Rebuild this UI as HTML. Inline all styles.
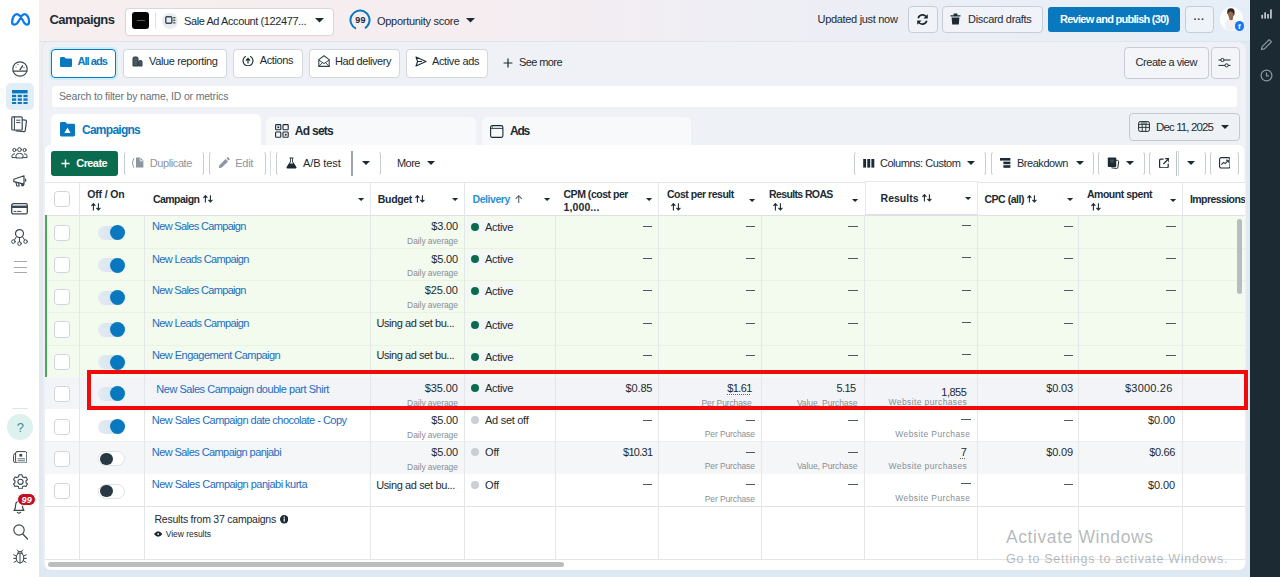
<!DOCTYPE html>
<html><head><meta charset="utf-8"><title>Campaigns</title>
<style>
*{box-sizing:border-box;margin:0;padding:0}
html,body{width:1280px;height:577px;overflow:hidden;background:linear-gradient(180deg,#f5ecef 0,#ecebf1 25%,#e6e9f0 50%,#dde9f3 100%);font-family:"Liberation Sans",sans-serif;color:#1c2b33;font-size:11px}
.abs{position:absolute}
#root{position:relative;width:1280px;height:577px;overflow:hidden}
#leftbar{left:0;top:0;width:39px;height:577px;background:#fff}
#topbar{left:39px;top:0;width:1211px;height:42px;background:linear-gradient(90deg,#f7eef0 0%,#f6edf0 35%,#efeef5 58%,#e5eef7 100%);border-bottom:1px solid #dfe3e8}
#rightbar{left:1250px;top:0;width:30px;height:577px;background:#1c2b33}
#panel{left:42px;top:41px;width:1205px;height:530px;background:linear-gradient(180deg,#eff1f6 0,#eef1f6 30%,#e8eef5 100%);border-radius:8px;border:1px solid #e1e5ea;border-left-color:#e6e9ef;border-right-color:#e6e9ef}
.t{position:absolute;white-space:nowrap}
</style></head><body><div id="root">
<div id="topbar" class="abs"></div>
<div class="abs" style="left:1243px;top:42px;width:7px;height:535px;background:#dde9f3"></div>
<div id="panel" class="abs"></div>
<div id="leftbar" class="abs"></div>
<div id="rightbar" class="abs"></div>
<svg class="abs" style="left:8.6px;top:10.8px;" width="23" height="16.8" viewBox="0 0 22 16"><path d="M3 11 C3 6 5.2 3 7.6 3 C10.2 3 12.2 7 13.8 10 C15 12.2 16.2 13 17.2 13 C18.6 13 19.2 11.6 19.2 10 C19.2 6.4 17.2 3 14.9 3 C12.6 3 11 6 9.4 9.4 C8.2 11.8 7 13 5.4 13 C3.8 13 3 12.2 3 11 Z" fill="none" stroke="#0a78ee" stroke-width="2.1" stroke-linejoin="round"/></svg>
<span class="t" style="left:49.4px;top:10px;font-size:13px;line-height:19px;font-weight:700;color:#1c2b33;letter-spacing:-0.56px;">Campaigns</span>
<div class="abs" style="left:124.5px;top:7.5px;width:209.5px;height:28px;background:#fff;border:1px solid #d3d9de;border-radius:4px;box-shadow:0 0 1px rgba(0,0,0,0.06);"></div>
<div class="abs" style="left:132px;top:12px;width:17px;height:17px;background:#050505;border-radius:3px"></div>
<div class="abs" style="left:137px;top:20.2px;width:8px;height:0.8px;background:#5a5a5a"></div>
<div class="abs" style="left:155px;top:12px;width:1px;height:17px;background:#dfe3e8"></div>
<div class="abs" style="left:162px;top:12.5px;width:16px;height:16px;background:#e9edf1;border-radius:50%"></div>
<svg class="abs" style="left:165px;top:16px;" width="11" height="9" viewBox="0 0 11 9"><rect x="0.8" y="0.8" width="6" height="6.4" rx="1" fill="none" stroke="#3a4a55" stroke-width="1.4"/><rect x="8.2" y="1" width="2.2" height="1.3" fill="#3a4a55"/><rect x="8.2" y="3.6" width="2.2" height="1.3" fill="#3a4a55"/><rect x="8.2" y="6.2" width="2.2" height="1.3" fill="#3a4a55"/></svg>
<span class="t" style="left:184.0px;top:13px;font-size:11px;line-height:16px;color:#1c2b33;letter-spacing:-0.41px;">Sale Ad Account (122477...</span>
<svg class="abs" style="left:314.5px;top:18.25px;" width="9" height="4.5" viewBox="0 0 9 4.5"><path d="M0 0H9 L4.5 4.5 Z" fill="#1c2b33"/></svg>
<svg class="abs" style="left:349px;top:9px;" width="22" height="22" viewBox="0 0 22 22"><circle cx="11" cy="11" r="9.5" fill="none" stroke="#0a78be" stroke-width="2" stroke-dasharray="50 9.7" transform="rotate(115 11 11)"/></svg>
<span class="t" style="left:355.2px;top:13px;font-size:9px;line-height:14px;font-weight:700;color:#1c2b33;letter-spacing:0.30px;">99</span>
<span class="t" style="left:377.0px;top:13px;font-size:11px;line-height:16px;color:#1c2b33;letter-spacing:-0.28px;">Opportunity score</span>
<svg class="abs" style="left:465.5px;top:18.25px;" width="9" height="4.5" viewBox="0 0 9 4.5"><path d="M0 0H9 L4.5 4.5 Z" fill="#1c2b33"/></svg>
<span class="t" style="left:817.5px;top:11px;font-size:11px;line-height:16px;color:#1c2b33;letter-spacing:-0.31px;">Updated just now</span>
<div class="abs" style="left:908px;top:6px;width:29.5px;height:26.5px;background:rgba(255,255,255,0.32);border:1px solid #c6cdd4;border-radius:4px;"></div>
<svg class="abs" style="left:916px;top:12.5px;" width="13" height="13" viewBox="0 0 13 13"><path d="M2.2 5.2A4.6 4.6 0 0 1 10.6 4.2" fill="none" stroke="#1c2b33" stroke-width="1.7"/><path d="M11.8 1.2V5.6H7.4Z" fill="#1c2b33"/><path d="M10.8 7.8A4.6 4.6 0 0 1 2.4 8.8" fill="none" stroke="#1c2b33" stroke-width="1.7"/><path d="M1.2 11.8V7.4H5.6Z" fill="#1c2b33"/></svg>
<div class="abs" style="left:942px;top:6px;width:101px;height:26.5px;background:rgba(255,255,255,0.32);border:1px solid #c6cdd4;border-radius:4px;"></div>
<svg class="abs" style="left:950px;top:13px;" width="11" height="12" viewBox="0 0 11 12"><path d="M0.5 2.2H10.5V3.6H0.5Z M3.6 0.6H7.4V2.2H3.6Z M1.6 4.4H9.4L8.8 11.6H2.2Z" fill="#1c2b33"/></svg>
<span class="t" style="left:968.0px;top:11px;font-size:11px;line-height:16px;color:#1c2b33;letter-spacing:-0.31px;">Discard drafts</span>
<div class="abs" style="left:1048px;top:6.5px;width:131.5px;height:25.5px;background:#0a78be;border-radius:3px"></div>
<span class="t" style="left:1060.0px;top:11px;font-size:11px;line-height:16px;font-weight:700;color:#fff;letter-spacing:-0.73px;">Review and publish (30)</span>
<div class="abs" style="left:1184.5px;top:6px;width:29.5px;height:26.5px;background:rgba(255,255,255,0.32);border:1px solid #c6cdd4;border-radius:4px;"></div>
<span class="t" style="left:1193.6px;top:11px;font-size:10.5px;line-height:16px;font-weight:700;color:#33424b;letter-spacing:0.17px;">···</span>
<div class="abs" style="left:1219.8px;top:7.4px;width:23.4px;height:23.6px;background:#fdfdfd;border-radius:50%"></div>
<svg class="abs" style="left:1219.8px;top:7.4px;" width="23.4" height="23.6" viewBox="0 0 23.4 23.6"><defs><clipPath id="av"><circle cx="11.7" cy="11.8" r="11.6"/></clipPath></defs><g clip-path="url(#av)"><path d="M4.6 24L5.6 15.6Q6.4 12.6 9.6 12L13.4 12Q16.4 12.8 17 15.6L18 24Z" fill="#f1eff0"/><path d="M9 9.4L9.4 12.6Q11 14 12.8 12.6L13.2 9.4Z" fill="#8d6247"/><ellipse cx="10.9" cy="7" rx="2.9" ry="3.6" fill="#94684c"/><path d="M7.2 6.6Q6.6 1.2 11 1.2Q15 1.2 14.6 5.8Q14.6 8 13.6 9.4Q13.8 4.6 10.4 4.4Q8.2 4.4 8 7.6Z" fill="#35261f"/></g></svg>
<div class="abs" style="left:1234.6px;top:21.2px;width:9.4px;height:9.4px;background:#1877f2;border-radius:50%"></div>
<span class="t" style="left:1238.1px;top:20px;font-size:8px;line-height:13px;font-weight:700;color:#fff;letter-spacing:0.00px;">f</span>
<svg class="abs" style="left:1260.6px;top:8.8px;" width="11.6" height="10" viewBox="0 0 14 12"><rect x="0.5" y="7" width="2" height="4.5" fill="#c8d0d6"/><rect x="4" y="4" width="2" height="7.5" fill="#c8d0d6"/><rect x="7.5" y="6" width="2" height="5.5" fill="#c8d0d6"/><rect x="11" y="0.5" width="2" height="11" fill="#c8d0d6"/></svg>
<svg class="abs" style="left:1260px;top:38px;" width="13" height="13" viewBox="0 0 13 13"><path d="M1.5 11.5L2.2 8.6L9.2 1.6L11.4 3.8L4.4 10.8Z" fill="none" stroke="#8e9aa3" stroke-width="1.2" stroke-linejoin="round"/></svg>
<svg class="abs" style="left:1259.6px;top:69.2px;" width="13" height="13" viewBox="0 0 13 13"><circle cx="6.5" cy="6.5" r="5.4" fill="none" stroke="#8e9aa3" stroke-width="1.2"/><path d="M6.5 3.4V6.8H9" fill="none" stroke="#8e9aa3" stroke-width="1.2"/></svg>
<div class="abs" style="left:50.5px;top:48.5px;width:65.5px;height:29px;background:#fff;border:1px solid #0a78be;border-radius:4px;box-shadow:0 0 0 2px rgba(190,236,246,0.75)"></div>
<svg class="abs" style="left:60px;top:57px;" width="12" height="10" viewBox="0 0 12 10"><path d="M0 1.2 Q0 0 1.2 0 H4.4 L5.6 1.4 H10.8 Q12 1.4 12 2.6 V8.8 Q12 10 10.8 10 H1.2 Q0 10 0 8.8 Z" fill="#0a78be"/></svg>
<span class="t" style="left:77.5px;top:53px;font-size:11px;line-height:16px;font-weight:700;color:#0a78be;letter-spacing:-0.94px;">All ads</span>
<div class="abs" style="left:122.5px;top:48.5px;width:104px;height:29px;background:#fff;border:1px solid #d3d9de;border-radius:4px;box-shadow:0 0 1px rgba(0,0,0,0.06);"></div>
<svg class="abs" style="left:132px;top:56px;" width="11" height="11" viewBox="0 0 11 11"><path d="M1 10V2.4Q1 1 2.4 1H4.6Q6 1 6 2.4V10Z M6.6 10V5.8Q6.6 4.6 7.8 4.6H8.8Q10 4.6 10 5.8V10Z" fill="#4a5963" stroke="#2a3942" stroke-width="1"/></svg>
<span class="t" style="left:149.0px;top:53px;font-size:11px;line-height:16px;color:#1c2b33;letter-spacing:-0.35px;">Value reporting</span>
<div class="abs" style="left:233px;top:48.5px;width:69.5px;height:29px;background:#fff;border:1px solid #d3d9de;border-radius:4px;box-shadow:0 0 1px rgba(0,0,0,0.06);"></div>
<svg class="abs" style="left:242.2px;top:54.8px;" width="12" height="11.4" viewBox="0 0 12 11.4"><path d="M8.6 1.5A5 5 0 1 1 3.4 1.5" fill="none" stroke="#1c2b33" stroke-width="1.15" stroke-linecap="round"/><path d="M6 8.6V3.8M3.9 5.6L6 3.5L8.1 5.6" fill="none" stroke="#1c2b33" stroke-width="1.25"/></svg>
<span class="t" style="left:259.8px;top:52px;font-size:11px;line-height:16px;color:#1c2b33;letter-spacing:-0.41px;">Actions</span>
<div class="abs" style="left:309px;top:48.5px;width:91px;height:29px;background:#fff;border:1px solid #d3d9de;border-radius:4px;box-shadow:0 0 1px rgba(0,0,0,0.06);"></div>
<svg class="abs" style="left:317.5px;top:54.8px;" width="12" height="12.4" viewBox="0 0 12 12.4"><path d="M0.8 4.6L6 0.8L11.2 4.6V11.4H0.8Z" fill="none" stroke="#34434c" stroke-width="1.1" stroke-linejoin="round"/><path d="M0.8 5L6 8.6L11.2 5M0.8 11.4L4.5 7.6M11.2 11.4L7.5 7.6" fill="none" stroke="#34434c" stroke-width="1"/></svg>
<span class="t" style="left:335.0px;top:53px;font-size:11px;line-height:16px;color:#1c2b33;letter-spacing:-0.43px;">Had delivery</span>
<div class="abs" style="left:406px;top:48.5px;width:81.5px;height:29px;background:#fff;border:1px solid #d3d9de;border-radius:4px;box-shadow:0 0 1px rgba(0,0,0,0.06);"></div>
<svg class="abs" style="left:415px;top:56px;" width="12" height="11" viewBox="0 0 12 11"><path d="M1 1L11 5.5L1 10L2.6 5.5Z M2.6 5.5H7" fill="none" stroke="#1c2b33" stroke-width="1.1" stroke-linejoin="round"/></svg>
<span class="t" style="left:432.0px;top:53px;font-size:11px;line-height:16px;color:#1c2b33;letter-spacing:-0.37px;">Active ads</span>
<svg class="abs" style="left:503px;top:57.5px;" width="10" height="10" viewBox="0 0 10 10"><path d="M5 0.6V9.4M0.6 5H9.4" stroke="#1c2b33" stroke-width="1.2"/></svg>
<span class="t" style="left:519.0px;top:54px;font-size:11px;line-height:16px;color:#1c2b33;letter-spacing:-0.59px;">See more</span>
<div class="abs" style="left:1124px;top:47px;width:84.5px;height:31.5px;background:rgba(255,255,255,0.32);border:1px solid #c6cdd4;border-radius:4px;"></div>
<span class="t" style="left:1135.5px;top:54px;font-size:11px;line-height:16px;color:#1c2b33;letter-spacing:-0.44px;">Create a view</span>
<div class="abs" style="left:1210.5px;top:47px;width:29px;height:31.5px;background:rgba(255,255,255,0.32);border:1px solid #c6cdd4;border-radius:4px;"></div>
<svg class="abs" style="left:1218px;top:57px;" width="13" height="11" viewBox="0 0 13 11"><path d="M0.5 3H12.5M0.5 8.4H12.5" stroke="#1c2b33" stroke-width="1"/><circle cx="4.4" cy="3" r="1.6" fill="#f5f7f9" stroke="#1c2b33" stroke-width="1"/><circle cx="8.6" cy="8.4" r="1.6" fill="#f5f7f9" stroke="#1c2b33" stroke-width="1"/></svg>
<div class="abs" style="left:52px;top:85.5px;width:1185px;height:21px;background:#fff;border-radius:3px"></div>
<span class="t" style="left:59.0px;top:88px;font-size:10.5px;line-height:16px;color:#65727d;letter-spacing:-0.18px;">Search to filter by name, ID or metrics</span>
<div class="abs" style="left:51px;top:114px;width:210px;height:36px;background:#fff;border-radius:6px 6px 0 0"></div>
<div class="abs" style="left:266px;top:117px;width:209.5px;height:29px;background:#f7f9fb;border-radius:6px 6px 0 0"></div>
<div class="abs" style="left:481.5px;top:117px;width:209.5px;height:29px;background:#f7f9fb;border-radius:6px 6px 0 0"></div>
<svg class="abs" style="left:60px;top:122px;" width="15" height="14.5" viewBox="0 0 15 14.5"><path d="M0 1.4Q0 0 1.4 0H5.4L7 1.8H13.6Q15 1.8 15 3.2V13.1Q15 14.5 13.6 14.5H1.4Q0 14.5 0 13.1Z" fill="#0a78be"/><path d="M7.5 5.4L10.6 11H4.4Z" fill="#fff"/></svg>
<span class="t" style="left:82.0px;top:121px;font-size:12px;line-height:18px;font-weight:700;color:#0a78be;letter-spacing:-0.74px;">Campaigns</span>
<svg class="abs" style="left:275px;top:124px;" width="14" height="14" viewBox="0 0 14 14"><g fill="none" stroke="#1c2b33" stroke-width="1.1"><rect x="0.6" y="0.6" width="5.2" height="5.2" rx="0.8"/><rect x="8" y="0.6" width="5.2" height="5.2" rx="0.8"/><rect x="0.6" y="8" width="5.2" height="5.2" rx="0.8"/><rect x="8" y="8" width="5.2" height="5.2" rx="0.8"/></g><rect x="2.4" y="2.4" width="1.8" height="1.8" fill="#1c2b33"/><rect x="9.8" y="9.8" width="1.8" height="1.8" fill="#1c2b33"/></svg>
<span class="t" style="left:294.8px;top:122px;font-size:12px;line-height:18px;font-weight:700;color:#1c2b33;letter-spacing:-0.73px;">Ad sets</span>
<svg class="abs" style="left:490px;top:124.5px;" width="13.5" height="13" viewBox="0 0 13.5 13"><rect x="0.6" y="0.6" width="12.3" height="11.8" rx="1.6" fill="none" stroke="#1c2b33" stroke-width="1.1"/><path d="M0.6 3.4H12.9" stroke="#1c2b33" stroke-width="0.9"/><circle cx="2.4" cy="2" r="0.6" fill="#1c2b33"/></svg>
<span class="t" style="left:510.0px;top:122px;font-size:12px;line-height:18px;font-weight:700;color:#1c2b33;letter-spacing:-1.22px;">Ads</span>
<div class="abs" style="left:1129px;top:113px;width:111px;height:27.5px;background:#eef2f6;border:1px solid #c3cbd2;border-radius:4px"></div>
<svg class="abs" style="left:1138px;top:121px;" width="12" height="11" viewBox="0 0 12 11"><rect x="0.6" y="0.6" width="10.8" height="9.8" rx="1.6" fill="none" stroke="#1c2b33" stroke-width="1"/><path d="M0.6 3.4H11.4M0.6 6.4H11.4M4.2 3.4V10.4M7.8 3.4V10.4M2.6 2H9.4" stroke="#1c2b33" stroke-width="0.9" fill="none"/></svg>
<span class="t" style="left:1156.0px;top:119px;font-size:11.5px;line-height:16px;color:#1c2b33;letter-spacing:-0.88px;">Dec 11, 2025</span>
<svg class="abs" style="left:1221px;top:124.5px;" width="8" height="4" viewBox="0 0 8 4"><path d="M0 0H8 L4 4 Z" fill="#1c2b33"/></svg>
<div class="abs" style="left:45px;top:145px;width:1199px;height:38px;background:#fff;border-radius:5px 5px 0 0"></div>
<div class="abs" style="left:51px;top:151px;width:67px;height:25px;background:#0a6b4e;border-radius:3px"></div>
<svg class="abs" style="left:60.5px;top:158.5px;" width="9" height="9" viewBox="0 0 9 9"><path d="M4.5 0.4V8.6M0.4 4.5H8.6" stroke="#fff" stroke-width="1.4"/></svg>
<span class="t" style="left:76.3px;top:155px;font-size:11px;line-height:16px;font-weight:700;color:#fff;letter-spacing:-0.59px;">Create</span>
<div class="abs" style="left:123.5px;top:151px;width:80.5px;height:25px;border:1px solid #c6cdd3;border-top-color:transparent;border-bottom-color:transparent;border-radius:4px"></div>
<svg class="abs" style="left:132px;top:157px;" width="12" height="12" viewBox="0 0 12 12"><path d="M2 1.4Q0.6 3.4 0.6 6Q0.6 8.6 2 10.6" fill="none" stroke="#8c969e" stroke-width="1"/><path d="M4 0.6H8.4L11.4 3.6V10.6H4Z" fill="#8c969e"/><path d="M8.2 0.8V3.8H11.2" fill="none" stroke="#fff" stroke-width="0.8"/></svg>
<span class="t" style="left:149.8px;top:155px;font-size:11px;line-height:16px;color:#8c969e;letter-spacing:-0.41px;">Duplicate</span>
<div class="abs" style="left:208.5px;top:151px;width:57px;height:25px;border:1px solid #c6cdd3;border-top-color:transparent;border-bottom-color:transparent;border-radius:4px"></div>
<svg class="abs" style="left:217.5px;top:157px;" width="12" height="12" viewBox="0 0 12 12"><path d="M0.8 11.2L1.4 8.2L7.6 2L10 4.4L3.8 10.6Z M8.4 1.2L9.2 0.4Q9.8 0 10.4 0.6L11.4 1.6Q12 2.2 11.4 2.8L10.6 3.6Z" fill="#8c969e"/></svg>
<span class="t" style="left:235.3px;top:155px;font-size:11px;line-height:16px;color:#8c969e;letter-spacing:-0.31px;">Edit</span>
<div class="abs" style="left:270.3px;top:151px;width:1px;height:25px;background:#d9dee2"></div>
<div class="abs" style="left:276px;top:151px;width:104.8px;height:25px;border:1px solid #c6cdd3;border-top-color:transparent;border-bottom-color:transparent;border-radius:4px"></div>
<svg class="abs" style="left:285.5px;top:157px;" width="11" height="12" viewBox="0 0 11 12"><path d="M3.6 0.6H7.4V1.6H6.9V4.6L10.4 10Q11 11.4 9.6 11.4H1.4Q0 11.4 0.6 10L4.1 4.6V1.6H3.6Z" fill="#1c2b33"/><path d="M4.9 1.6H6.1V4.9L7.2 6.6H3.8L4.9 4.9Z" fill="#fff"/></svg>
<span class="t" style="left:303.0px;top:155px;font-size:11px;line-height:16px;color:#1c2b33;letter-spacing:-0.11px;">A/B test</span>
<div class="abs" style="left:351px;top:151px;width:1.6px;height:25px;background:#9ba4ab"></div>
<svg class="abs" style="left:361.8px;top:161px;" width="8" height="4" viewBox="0 0 8 4"><path d="M0 0H8 L4 4 Z" fill="#1c2b33"/></svg>
<span class="t" style="left:397.0px;top:155px;font-size:11px;line-height:16px;color:#1c2b33;letter-spacing:-0.56px;">More</span>
<svg class="abs" style="left:427.4px;top:161px;" width="8" height="4" viewBox="0 0 8 4"><path d="M0 0H8 L4 4 Z" fill="#1c2b33"/></svg>
<div class="abs" style="left:853.5px;top:151px;width:132.5px;height:25px;border:1px solid #c6cdd3;border-top-color:transparent;border-bottom-color:transparent;border-radius:4px"></div>
<svg class="abs" style="left:862.5px;top:158.5px;" width="12" height="9" viewBox="0 0 12 9"><rect x="0.2" y="0" width="2.9" height="8.6" fill="#1c2b33"/><rect x="4.3" y="0" width="2.9" height="8.6" fill="#1c2b33"/><rect x="8.4" y="0" width="2.9" height="8.6" fill="#1c2b33"/></svg>
<span class="t" style="left:880.0px;top:155px;font-size:11px;line-height:16px;color:#1c2b33;letter-spacing:-0.47px;">Columns: Custom</span>
<svg class="abs" style="left:967.4px;top:161px;" width="8" height="4" viewBox="0 0 8 4"><path d="M0 0H8 L4 4 Z" fill="#1c2b33"/></svg>
<div class="abs" style="left:990.5px;top:151px;width:103.5px;height:25px;border:1px solid #c6cdd3;border-top-color:transparent;border-bottom-color:transparent;border-radius:4px"></div>
<svg class="abs" style="left:1000px;top:158px;" width="11" height="10" viewBox="0 0 11 10"><rect x="0" y="0" width="10.4" height="2.6" fill="#1c2b33"/><rect x="3.4" y="3.6" width="7" height="2.6" fill="#1c2b33"/><rect x="3.4" y="7.2" width="7" height="2.6" fill="#1c2b33"/></svg>
<span class="t" style="left:1017.0px;top:155px;font-size:11px;line-height:16px;color:#1c2b33;letter-spacing:-0.47px;">Breakdown</span>
<svg class="abs" style="left:1075.5px;top:161px;" width="8" height="4" viewBox="0 0 8 4"><path d="M0 0H8 L4 4 Z" fill="#1c2b33"/></svg>
<div class="abs" style="left:1098.3px;top:151px;width:46.7px;height:25px;border:1px solid #c6cdd3;border-top-color:transparent;border-bottom-color:transparent;border-radius:4px"></div>
<svg class="abs" style="left:1106.5px;top:157px;" width="13" height="12" viewBox="0 0 13 12"><path d="M3.4 2.6L10.6 3.4Q11.8 3.6 11.6 4.8L10.8 10.6Q10.6 11.6 9.6 11.4L4.4 10.8" fill="none" stroke="#1c2b33" stroke-width="1"/><path d="M1.6 0.4H8.4Q9.2 0.4 9.2 1.2V9.2Q9.2 10 8.4 10H1.6Q0.8 10 0.8 9.2V1.2Q0.8 0.4 1.6 0.4Z" fill="#1c2b33"/><path d="M3.2 3.2H7M3.2 5H7" stroke="#6b7780" stroke-width="0.7"/></svg>
<svg class="abs" style="left:1125.9px;top:161px;" width="8" height="4" viewBox="0 0 8 4"><path d="M0 0H8 L4 4 Z" fill="#1c2b33"/></svg>
<div class="abs" style="left:1149.2px;top:151px;width:56.8px;height:25px;border:1px solid #c6cdd3;border-top-color:transparent;border-bottom-color:transparent;border-radius:4px"></div>
<svg class="abs" style="left:1158.5px;top:157.8px;" width="10.5" height="10.5" viewBox="0 0 10.5 10.5"><path d="M4.6 1.2H1.8Q0.6 1.2 0.6 2.4V8.6Q0.6 9.8 1.8 9.8H8Q9.2 9.8 9.2 8.6V5.8" fill="none" stroke="#1c2b33" stroke-width="1.2"/><path d="M4.4 6L9.4 1" stroke="#1c2b33" stroke-width="1.2"/><path d="M6.2 0.6H9.9V4.3" fill="none" stroke="#1c2b33" stroke-width="1.2"/></svg>
<div class="abs" style="left:1176.4px;top:151px;width:0.9px;height:25px;background:#bcc3c9"></div>
<div class="abs" style="left:1178.1px;top:151px;width:0.9px;height:25px;background:#d0d5da"></div>
<svg class="abs" style="left:1187px;top:161px;" width="8" height="4" viewBox="0 0 8 4"><path d="M0 0H8 L4 4 Z" fill="#1c2b33"/></svg>
<div class="abs" style="left:1210px;top:151px;width:29px;height:25px;border:1px solid #c6cdd3;border-top-color:transparent;border-bottom-color:transparent;border-radius:4px"></div>
<svg class="abs" style="left:1218.8px;top:157.2px;" width="11.6" height="11.6" viewBox="0 0 11.6 11.6"><rect x="0.6" y="0.6" width="10.4" height="10.4" rx="1.6" fill="none" stroke="#1c2b33" stroke-width="1.1"/><path d="M2.4 7.6L4.6 5.4L6.2 6.6L9 3.6" fill="none" stroke="#1c2b33" stroke-width="1.1"/><path d="M7 3.2H9.4V5.6" fill="none" stroke="#1c2b33" stroke-width="1"/></svg>
<div class="abs" style="left:45px;top:182px;width:1199.5px;height:33.4px;background:#fff;border-top:1px solid #e2e6ea"></div>
<div class="abs" style="left:45px;top:215.4px;width:1199.5px;height:32.3px;background:#f3faee;border-top:1px solid rgba(40,60,40,0.045)"></div>
<div class="abs" style="left:45px;top:247.7px;width:1199.5px;height:32.3px;background:#f3faee;border-top:1px solid rgba(40,60,40,0.045)"></div>
<div class="abs" style="left:45px;top:280px;width:1199.5px;height:32.3px;background:#f3faee;border-top:1px solid rgba(40,60,40,0.045)"></div>
<div class="abs" style="left:45px;top:312.3px;width:1199.5px;height:32.3px;background:#f3faee;border-top:1px solid rgba(40,60,40,0.045)"></div>
<div class="abs" style="left:45px;top:344.6px;width:1199.5px;height:32.3px;background:#f3faee;border-top:1px solid rgba(40,60,40,0.045)"></div>
<div class="abs" style="left:45px;top:376.9px;width:1199.5px;height:32.3px;background:#f2f4f7;"></div>
<div class="abs" style="left:45px;top:409.2px;width:1199.5px;height:32.3px;background:#ffffff;"></div>
<div class="abs" style="left:45px;top:441.5px;width:1199.5px;height:32.3px;background:#f5f6f8;"></div>
<div class="abs" style="left:45px;top:473.8px;width:1199.5px;height:32.3px;background:#ffffff;"></div>
<div class="abs" style="left:45px;top:506.1px;width:1199.5px;height:53.9px;background:#fff;border-top:1px solid #dfe3e6"></div>
<div class="abs" style="left:45px;top:559px;width:1199.5px;height:11px;background:#fff;border-radius:0 0 6px 6px;border-top:1px solid #e3e6e9"></div>
<div class="abs" style="left:45px;top:215px;width:1199.5px;height:1px;background:#dde1e5"></div>
<div class="abs" style="left:45px;top:215.4px;width:1.6px;height:161.6px;background:#4fa75a"></div>
<div class="abs" style="left:79px;top:182px;width:1px;height:378px;background:#e4e7ea"></div>
<div class="abs" style="left:144px;top:215.4px;width:1px;height:344.6px;background:#e4e7ea"></div>
<div class="abs" style="left:370px;top:182px;width:1px;height:378px;background:#e4e7ea"></div>
<div class="abs" style="left:464px;top:182px;width:1px;height:378px;background:#e4e7ea"></div>
<div class="abs" style="left:555px;top:215.4px;width:1px;height:344.6px;background:#e4e7ea"></div>
<div class="abs" style="left:658px;top:182px;width:1px;height:378px;background:#e4e7ea"></div>
<div class="abs" style="left:760.5px;top:215.4px;width:1px;height:344.6px;background:#e4e7ea"></div>
<div class="abs" style="left:864px;top:215.4px;width:1px;height:344.6px;background:#e4e7ea"></div>
<div class="abs" style="left:977px;top:215.4px;width:1px;height:344.6px;background:#e4e7ea"></div>
<div class="abs" style="left:1078px;top:215.4px;width:1px;height:344.6px;background:#e4e7ea"></div>
<div class="abs" style="left:1181.5px;top:182px;width:1px;height:378px;background:#e4e7ea"></div>
<div class="abs" style="left:864.5px;top:181px;width:113.5px;height:33.5px;background:#fff;border:1px solid #e6e9ec;border-bottom-color:#dde1e5"></div>
<div class="abs" style="left:1237px;top:219px;width:4.5px;height:75px;background:#b9bdc1;border-radius:3px"></div>
<div class="abs" style="left:48px;top:562px;width:516.3px;height:5px;background:#bcbdbf;border-radius:3px"></div>
<div class="abs" style="left:53.5px;top:191px;width:16.8px;height:16.4px;background:#fff;border:1px solid #cfd5da;border-radius:3.5px"></div>
<span class="t" style="left:87.3px;top:186px;font-size:10.5px;line-height:16px;font-weight:700;color:#1c2b33;letter-spacing:-0.17px;font-weight:600;">Off / On</span>
<svg class="abs" style="left:91px;top:203.4px;" width="10" height="7.6" viewBox="0 0 10 7.6"><path d="M2.4 7.4V0.8M0.4 2.8L2.4 0.6L4.4 2.8M7.4 0.2V6.8M5.4 4.8L7.4 7L9.4 4.8" fill="none" stroke="#1c2b33" stroke-width="1.1"/></svg>
<span class="t" style="left:152.9px;top:191px;font-size:10.5px;line-height:16px;font-weight:700;color:#1c2b33;letter-spacing:-0.52px;font-weight:600;">Campaign</span>
<svg class="abs" style="left:202.5px;top:195px;" width="10" height="7.6" viewBox="0 0 10 7.6"><path d="M2.4 7.4V0.8M0.4 2.8L2.4 0.6L4.4 2.8M7.4 0.2V6.8M5.4 4.8L7.4 7L9.4 4.8" fill="none" stroke="#1c2b33" stroke-width="1.1"/></svg>
<svg class="abs" style="left:358.4px;top:198.45px;" width="6.2" height="3.1" viewBox="0 0 6.2 3.1"><path d="M0 0H6.2 L3.1 3.1 Z" fill="#1c2b33"/></svg>
<span class="t" style="left:377.8px;top:191px;font-size:10.5px;line-height:16px;font-weight:700;color:#1c2b33;letter-spacing:-0.33px;font-weight:600;">Budget</span>
<svg class="abs" style="left:415.2px;top:195px;" width="10" height="7.6" viewBox="0 0 10 7.6"><path d="M2.4 7.4V0.8M0.4 2.8L2.4 0.6L4.4 2.8M7.4 0.2V6.8M5.4 4.8L7.4 7L9.4 4.8" fill="none" stroke="#1c2b33" stroke-width="1.1"/></svg>
<svg class="abs" style="left:451.9px;top:198.45px;" width="6.2" height="3.1" viewBox="0 0 6.2 3.1"><path d="M0 0H6.2 L3.1 3.1 Z" fill="#1c2b33"/></svg>
<span class="t" style="left:472.5px;top:191px;font-size:10.5px;line-height:16px;font-weight:700;color:#2b8fd6;letter-spacing:-0.44px;font-weight:600;">Delivery</span>
<svg class="abs" style="left:514.8px;top:194.8px;" width="8" height="8" viewBox="0 0 8 8"><path d="M3.7 8V0.8M0.6 3.8L3.7 0.7L6.8 3.8" fill="none" stroke="#5b6770" stroke-width="1.1"/></svg>
<svg class="abs" style="left:544.1px;top:198.45px;" width="6.2" height="3.1" viewBox="0 0 6.2 3.1"><path d="M0 0H6.2 L3.1 3.1 Z" fill="#1c2b33"/></svg>
<span class="t" style="left:563.5px;top:186px;font-size:10.5px;line-height:16px;font-weight:700;color:#1c2b33;letter-spacing:-0.47px;font-weight:600;">CPM (cost per</span>
<span class="t" style="left:563.5px;top:199px;font-size:10.5px;line-height:16px;font-weight:700;color:#1c2b33;letter-spacing:0.11px;font-weight:600;">1,000...</span>
<svg class="abs" style="left:646.2px;top:198.45px;" width="6.2" height="3.1" viewBox="0 0 6.2 3.1"><path d="M0 0H6.2 L3.1 3.1 Z" fill="#1c2b33"/></svg>
<span class="t" style="left:666.9px;top:186px;font-size:10.5px;line-height:16px;font-weight:700;color:#1c2b33;letter-spacing:-0.48px;font-weight:600;">Cost per result</span>
<svg class="abs" style="left:670.6px;top:203.4px;" width="10" height="7.6" viewBox="0 0 10 7.6"><path d="M2.4 7.4V0.8M0.4 2.8L2.4 0.6L4.4 2.8M7.4 0.2V6.8M5.4 4.8L7.4 7L9.4 4.8" fill="none" stroke="#1c2b33" stroke-width="1.1"/></svg>
<svg class="abs" style="left:749.3px;top:199.45px;" width="6.2" height="3.1" viewBox="0 0 6.2 3.1"><path d="M0 0H6.2 L3.1 3.1 Z" fill="#1c2b33"/></svg>
<span class="t" style="left:769.0px;top:186px;font-size:10.5px;line-height:16px;font-weight:700;color:#1c2b33;letter-spacing:-0.62px;font-weight:600;">Results ROAS</span>
<svg class="abs" style="left:772.8px;top:203.4px;" width="10" height="7.6" viewBox="0 0 10 7.6"><path d="M2.4 7.4V0.8M0.4 2.8L2.4 0.6L4.4 2.8M7.4 0.2V6.8M5.4 4.8L7.4 7L9.4 4.8" fill="none" stroke="#1c2b33" stroke-width="1.1"/></svg>
<svg class="abs" style="left:851.7px;top:199.45px;" width="6.2" height="3.1" viewBox="0 0 6.2 3.1"><path d="M0 0H6.2 L3.1 3.1 Z" fill="#1c2b33"/></svg>
<span class="t" style="left:880.6px;top:190px;font-size:10.5px;line-height:16px;font-weight:700;color:#1c2b33;letter-spacing:-0.00px;font-weight:600;">Results</span>
<svg class="abs" style="left:922px;top:194.1px;" width="10" height="7.6" viewBox="0 0 10 7.6"><path d="M2.4 7.4V0.8M0.4 2.8L2.4 0.6L4.4 2.8M7.4 0.2V6.8M5.4 4.8L7.4 7L9.4 4.8" fill="none" stroke="#1c2b33" stroke-width="1.1"/></svg>
<svg class="abs" style="left:965.1px;top:197.45px;" width="6.2" height="3.1" viewBox="0 0 6.2 3.1"><path d="M0 0H6.2 L3.1 3.1 Z" fill="#1c2b33"/></svg>
<span class="t" style="left:984.4px;top:191px;font-size:10.5px;line-height:16px;font-weight:700;color:#1c2b33;letter-spacing:-0.46px;font-weight:600;">CPC (all)</span>
<svg class="abs" style="left:1027.3px;top:195px;" width="10" height="7.6" viewBox="0 0 10 7.6"><path d="M2.4 7.4V0.8M0.4 2.8L2.4 0.6L4.4 2.8M7.4 0.2V6.8M5.4 4.8L7.4 7L9.4 4.8" fill="none" stroke="#1c2b33" stroke-width="1.1"/></svg>
<svg class="abs" style="left:1067.4px;top:198.45px;" width="6.2" height="3.1" viewBox="0 0 6.2 3.1"><path d="M0 0H6.2 L3.1 3.1 Z" fill="#1c2b33"/></svg>
<span class="t" style="left:1086.9px;top:186px;font-size:10.5px;line-height:16px;font-weight:700;color:#1c2b33;letter-spacing:-0.46px;font-weight:600;">Amount spent</span>
<svg class="abs" style="left:1090.6px;top:203.4px;" width="10" height="7.6" viewBox="0 0 10 7.6"><path d="M2.4 7.4V0.8M0.4 2.8L2.4 0.6L4.4 2.8M7.4 0.2V6.8M5.4 4.8L7.4 7L9.4 4.8" fill="none" stroke="#1c2b33" stroke-width="1.1"/></svg>
<svg class="abs" style="left:1169.6px;top:199.45px;" width="6.2" height="3.1" viewBox="0 0 6.2 3.1"><path d="M0 0H6.2 L3.1 3.1 Z" fill="#1c2b33"/></svg>
<div class="abs" style="left:1185px;top:185px;width:59.5px;height:28px;overflow:hidden">
<span class="t" style="left:5.0px;top:6px;font-size:10.5px;line-height:16px;font-weight:700;color:#1c2b33;letter-spacing:-0.58px;font-weight:600;">Impressions</span>
</div>
<div class="abs" style="left:53.5px;top:224.5px;width:16.8px;height:16.4px;background:#fff;border:1px solid #cfd5da;border-radius:3.5px"></div>
<div class="abs" style="left:98px;top:225.9px;width:27.3px;height:14px;background:linear-gradient(90deg,#e3ebf2,#cfe0ee);border-radius:7px"></div>
<div class="abs" style="left:110.4px;top:225.4px;width:15px;height:15px;background:#0a78be;border-radius:50%"></div>
<span class="t" style="left:151.9px;top:218px;font-size:11px;line-height:16px;color:#1b6ec2;letter-spacing:-0.66px;">New Sales Campaign</span>
<span class="t" style="left:431.3px;top:218px;font-size:11px;line-height:16px;color:#1c2b33;letter-spacing:-0.20px;">$3.00</span>
<span class="t" style="left:407.1px;top:234px;font-size:8.5px;line-height:14px;color:#878f97;letter-spacing:-0.09px;">Daily average</span>
<div class="abs" style="left:466.5px;top:220.6px;width:52px;height:12.4px;background:rgba(244,246,250,0.75);border-radius:3px"></div>
<div class="abs" style="left:471px;top:222.6px;width:8.2px;height:8.2px;background:#0a6b4e;border-radius:50%"></div>
<span class="t" style="left:485.0px;top:219px;font-size:11px;line-height:16px;color:#1c2b33;letter-spacing:-0.33px;">Active</span>
<div class="abs" style="left:643.1px;top:226px;width:9.4px;height:1px;background:#4c5861"></div>
<div class="abs" style="left:745.6px;top:226px;width:9.4px;height:1px;background:#4c5861"></div>
<div class="abs" style="left:848.4px;top:226px;width:9.4px;height:1px;background:#4c5861"></div>
<div class="abs" style="left:961.6px;top:225px;width:9.4px;height:1px;background:#4c5861"></div>
<div class="abs" style="left:1063.6px;top:226px;width:9.4px;height:1px;background:#4c5861"></div>
<div class="abs" style="left:1166.2px;top:226px;width:9.4px;height:1px;background:#4c5861"></div>
<div class="abs" style="left:53.5px;top:256.8px;width:16.8px;height:16.4px;background:#fff;border:1px solid #cfd5da;border-radius:3.5px"></div>
<div class="abs" style="left:98px;top:258.2px;width:27.3px;height:14px;background:linear-gradient(90deg,#e3ebf2,#cfe0ee);border-radius:7px"></div>
<div class="abs" style="left:110.4px;top:257.7px;width:15px;height:15px;background:#0a78be;border-radius:50%"></div>
<span class="t" style="left:151.9px;top:251px;font-size:11px;line-height:16px;color:#1b6ec2;letter-spacing:-0.63px;">New Leads Campaign</span>
<span class="t" style="left:431.3px;top:251px;font-size:11px;line-height:16px;color:#1c2b33;letter-spacing:-0.20px;">$5.00</span>
<span class="t" style="left:407.1px;top:266px;font-size:8.5px;line-height:14px;color:#878f97;letter-spacing:-0.09px;">Daily average</span>
<div class="abs" style="left:466.5px;top:253.2px;width:52px;height:12.4px;background:rgba(244,246,250,0.75);border-radius:3px"></div>
<div class="abs" style="left:471px;top:255.2px;width:8.2px;height:8.2px;background:#0a6b4e;border-radius:50%"></div>
<span class="t" style="left:485.0px;top:251px;font-size:11px;line-height:16px;color:#1c2b33;letter-spacing:-0.33px;">Active</span>
<div class="abs" style="left:643.1px;top:258px;width:9.4px;height:1px;background:#4c5861"></div>
<div class="abs" style="left:745.6px;top:258px;width:9.4px;height:1px;background:#4c5861"></div>
<div class="abs" style="left:848.4px;top:258px;width:9.4px;height:1px;background:#4c5861"></div>
<div class="abs" style="left:961.6px;top:257px;width:9.4px;height:1px;background:#4c5861"></div>
<div class="abs" style="left:1063.6px;top:258px;width:9.4px;height:1px;background:#4c5861"></div>
<div class="abs" style="left:1166.2px;top:258px;width:9.4px;height:1px;background:#4c5861"></div>
<div class="abs" style="left:53.5px;top:289.1px;width:16.8px;height:16.4px;background:#fff;border:1px solid #cfd5da;border-radius:3.5px"></div>
<div class="abs" style="left:98px;top:290.5px;width:27.3px;height:14px;background:linear-gradient(90deg,#e3ebf2,#cfe0ee);border-radius:7px"></div>
<div class="abs" style="left:110.4px;top:290px;width:15px;height:15px;background:#0a78be;border-radius:50%"></div>
<span class="t" style="left:151.9px;top:282px;font-size:11px;line-height:16px;color:#1b6ec2;letter-spacing:-0.66px;">New Sales Campaign</span>
<span class="t" style="left:424.8px;top:282px;font-size:11px;line-height:16px;color:#1c2b33;letter-spacing:-0.11px;">$25.00</span>
<span class="t" style="left:407.1px;top:298px;font-size:8.5px;line-height:14px;color:#878f97;letter-spacing:-0.09px;">Daily average</span>
<div class="abs" style="left:466.5px;top:285.1px;width:52px;height:12.4px;background:rgba(244,246,250,0.75);border-radius:3px"></div>
<div class="abs" style="left:471px;top:287.1px;width:8.2px;height:8.2px;background:#0a6b4e;border-radius:50%"></div>
<span class="t" style="left:485.0px;top:283px;font-size:11px;line-height:16px;color:#1c2b33;letter-spacing:-0.33px;">Active</span>
<div class="abs" style="left:643.1px;top:290px;width:9.4px;height:1px;background:#4c5861"></div>
<div class="abs" style="left:745.6px;top:290px;width:9.4px;height:1px;background:#4c5861"></div>
<div class="abs" style="left:848.4px;top:290px;width:9.4px;height:1px;background:#4c5861"></div>
<div class="abs" style="left:961.6px;top:290px;width:9.4px;height:1px;background:#4c5861"></div>
<div class="abs" style="left:1063.6px;top:290px;width:9.4px;height:1px;background:#4c5861"></div>
<div class="abs" style="left:1166.2px;top:290px;width:9.4px;height:1px;background:#4c5861"></div>
<div class="abs" style="left:53.5px;top:321.4px;width:16.8px;height:16.4px;background:#fff;border:1px solid #cfd5da;border-radius:3.5px"></div>
<div class="abs" style="left:98px;top:322.8px;width:27.3px;height:14px;background:linear-gradient(90deg,#e3ebf2,#cfe0ee);border-radius:7px"></div>
<div class="abs" style="left:110.4px;top:322.3px;width:15px;height:15px;background:#0a78be;border-radius:50%"></div>
<span class="t" style="left:151.9px;top:315px;font-size:11px;line-height:16px;color:#1b6ec2;letter-spacing:-0.63px;">New Leads Campaign</span>
<span class="t" style="left:376.5px;top:315px;font-size:11px;line-height:16px;color:#1c2b33;letter-spacing:-0.44px;">Using ad set bu...</span>
<div class="abs" style="left:466.5px;top:319.1px;width:52px;height:12.4px;background:rgba(244,246,250,0.75);border-radius:3px"></div>
<div class="abs" style="left:471px;top:321.1px;width:8.2px;height:8.2px;background:#0a6b4e;border-radius:50%"></div>
<span class="t" style="left:485.0px;top:317px;font-size:11px;line-height:16px;color:#1c2b33;letter-spacing:-0.33px;">Active</span>
<div class="abs" style="left:643.1px;top:323px;width:9.4px;height:1px;background:#4c5861"></div>
<div class="abs" style="left:745.6px;top:323px;width:9.4px;height:1px;background:#4c5861"></div>
<div class="abs" style="left:848.4px;top:323px;width:9.4px;height:1px;background:#4c5861"></div>
<div class="abs" style="left:961.6px;top:322px;width:9.4px;height:1px;background:#4c5861"></div>
<div class="abs" style="left:1063.6px;top:323px;width:9.4px;height:1px;background:#4c5861"></div>
<div class="abs" style="left:1166.2px;top:323px;width:9.4px;height:1px;background:#4c5861"></div>
<div class="abs" style="left:53.5px;top:353.7px;width:16.8px;height:16.4px;background:#fff;border:1px solid #cfd5da;border-radius:3.5px"></div>
<div class="abs" style="left:98px;top:355.1px;width:27.3px;height:14px;background:linear-gradient(90deg,#e3ebf2,#cfe0ee);border-radius:7px"></div>
<div class="abs" style="left:110.4px;top:354.6px;width:15px;height:15px;background:#0a78be;border-radius:50%"></div>
<span class="t" style="left:151.9px;top:347px;font-size:11px;line-height:16px;color:#1b6ec2;letter-spacing:-0.54px;">New Engagement Campaign</span>
<span class="t" style="left:376.5px;top:347px;font-size:11px;line-height:16px;color:#1c2b33;letter-spacing:-0.44px;">Using ad set bu...</span>
<div class="abs" style="left:466.5px;top:351px;width:52px;height:12.4px;background:rgba(244,246,250,0.75);border-radius:3px"></div>
<div class="abs" style="left:471px;top:353px;width:8.2px;height:8.2px;background:#0a6b4e;border-radius:50%"></div>
<span class="t" style="left:485.0px;top:349px;font-size:11px;line-height:16px;color:#1c2b33;letter-spacing:-0.33px;">Active</span>
<div class="abs" style="left:643.1px;top:355px;width:9.4px;height:1px;background:#4c5861"></div>
<div class="abs" style="left:745.6px;top:355px;width:9.4px;height:1px;background:#4c5861"></div>
<div class="abs" style="left:848.4px;top:355px;width:9.4px;height:1px;background:#4c5861"></div>
<div class="abs" style="left:961.6px;top:354px;width:9.4px;height:1px;background:#4c5861"></div>
<div class="abs" style="left:1063.6px;top:355px;width:9.4px;height:1px;background:#4c5861"></div>
<div class="abs" style="left:1166.2px;top:355px;width:9.4px;height:1px;background:#4c5861"></div>
<div class="abs" style="left:53.5px;top:385.5px;width:16.8px;height:16.4px;background:#fff;border:1px solid #cfd5da;border-radius:3.5px"></div>
<div class="abs" style="left:98px;top:386.8px;width:27.3px;height:14px;background:linear-gradient(90deg,#e3ebf2,#cfe0ee);border-radius:7px"></div>
<div class="abs" style="left:110.4px;top:386.3px;width:15px;height:15px;background:#0a78be;border-radius:50%"></div>
<span class="t" style="left:156.3px;top:381px;font-size:11px;line-height:16px;color:#1b6ec2;letter-spacing:-0.47px;">New Sales Campaign double part Shirt</span>
<span class="t" style="left:424.8px;top:380px;font-size:11px;line-height:16px;color:#1c2b33;letter-spacing:-0.11px;">$35.00</span>
<span class="t" style="left:407.1px;top:396px;font-size:8.5px;line-height:14px;color:#878f97;letter-spacing:-0.09px;">Daily average</span>
<div class="abs" style="left:471px;top:383.9px;width:8.2px;height:8.2px;background:#0a6b4e;border-radius:50%"></div>
<span class="t" style="left:485.0px;top:380px;font-size:11px;line-height:16px;color:#1c2b33;letter-spacing:-0.33px;">Active</span>
<span class="t" style="left:625.6px;top:380px;font-size:11px;line-height:16px;color:#1c2b33;letter-spacing:-0.17px;">$0.85</span>
<span class="t" style="left:727.2px;top:380px;font-size:11px;line-height:16px;color:#1c2b33;letter-spacing:-0.57px;text-decoration:underline dotted #5b6770 1px;text-underline-offset:1.5px;">$1.61</span>
<span class="t" style="left:701.5px;top:396px;font-size:8.5px;line-height:14px;color:#878f97;letter-spacing:-0.12px;">Per Purchase</span>
<span class="t" style="left:836.5px;top:380px;font-size:11px;line-height:16px;color:#1c2b33;letter-spacing:-0.58px;">5.15</span>
<span class="t" style="left:796.9px;top:396px;font-size:8.5px;line-height:14px;color:#878f97;letter-spacing:-0.09px;">Value, Purchase</span>
<span class="t" style="left:941.3px;top:384px;font-size:11px;line-height:16px;color:#1c2b33;letter-spacing:-0.50px;">1,855</span>
<span class="t" style="left:888.5px;top:395px;font-size:8.5px;line-height:14px;color:#878f97;letter-spacing:0.39px;">Website purchases</span>
<span class="t" style="left:1046.2px;top:380px;font-size:11px;line-height:16px;color:#1c2b33;letter-spacing:-0.15px;">$0.03</span>
<span class="t" style="left:1125.0px;top:380px;font-size:11px;line-height:16px;color:#1c2b33;letter-spacing:0.20px;">$3000.26</span>
<div class="abs" style="left:53.5px;top:418.5px;width:16.8px;height:16.4px;background:#fff;border:1px solid #cfd5da;border-radius:3.5px"></div>
<div class="abs" style="left:98px;top:419.5px;width:27.3px;height:14px;background:linear-gradient(90deg,#e3ebf2,#cfe0ee);border-radius:7px"></div>
<div class="abs" style="left:110.4px;top:419px;width:15px;height:15px;background:#0a78be;border-radius:50%"></div>
<span class="t" style="left:151.8px;top:412px;font-size:11px;line-height:16px;color:#1b6ec2;letter-spacing:-0.53px;">New Sales Campaign date chocolate - Copy</span>
<span class="t" style="left:431.3px;top:412px;font-size:11px;line-height:16px;color:#1c2b33;letter-spacing:-0.20px;">$5.00</span>
<span class="t" style="left:407.1px;top:428px;font-size:8.5px;line-height:14px;color:#878f97;letter-spacing:-0.09px;">Daily average</span>
<div class="abs" style="left:471px;top:415.9px;width:8.2px;height:8.2px;background:#c9cfd6;border-radius:50%"></div>
<span class="t" style="left:485.0px;top:412px;font-size:11px;line-height:16px;color:#1c2b33;letter-spacing:-0.28px;">Ad set off</span>
<div class="abs" style="left:643.1px;top:420px;width:9.4px;height:1px;background:#4c5861"></div>
<div class="abs" style="left:745.6px;top:420px;width:9.4px;height:1px;background:#4c5861"></div>
<div class="abs" style="left:848.4px;top:420px;width:9.4px;height:1px;background:#4c5861"></div>
<div class="abs" style="left:961.2px;top:419px;width:9.4px;height:1px;background:#4c5861"></div>
<div class="abs" style="left:1063.6px;top:420px;width:9.4px;height:1px;background:#4c5861"></div>
<span class="t" style="left:704.8px;top:427px;font-size:8.5px;line-height:14px;color:#878f97;letter-spacing:-0.12px;">Per Purchase</span>
<span class="t" style="left:895.3px;top:427px;font-size:8.5px;line-height:14px;color:#878f97;letter-spacing:0.39px;">Website Purchase</span>
<span class="t" style="left:1148.0px;top:412px;font-size:11px;line-height:16px;color:#1c2b33;letter-spacing:-0.10px;">$0.00</span>
<div class="abs" style="left:53.5px;top:450.8px;width:16.8px;height:16.4px;background:#fff;border:1px solid #cfd5da;border-radius:3.5px"></div>
<div class="abs" style="left:98px;top:451.3px;width:27.3px;height:15px;background:#fff;border:1px solid #dde2e6;border-radius:8px"></div>
<div class="abs" style="left:100.2px;top:452.6px;width:12.4px;height:12.4px;background:#283943;border-radius:50%"></div>
<span class="t" style="left:151.8px;top:444px;font-size:11px;line-height:16px;color:#1b6ec2;letter-spacing:-0.58px;">New Sales Campaign panjabi</span>
<span class="t" style="left:431.3px;top:444px;font-size:11px;line-height:16px;color:#1c2b33;letter-spacing:-0.20px;">$5.00</span>
<span class="t" style="left:407.1px;top:460px;font-size:8.5px;line-height:14px;color:#878f97;letter-spacing:-0.09px;">Daily average</span>
<div class="abs" style="left:471px;top:448.2px;width:8.2px;height:8.2px;background:#c9cfd6;border-radius:50%"></div>
<span class="t" style="left:485.0px;top:444px;font-size:11px;line-height:16px;color:#1c2b33;letter-spacing:-0.16px;">Off</span>
<span class="t" style="left:623.0px;top:444px;font-size:11px;line-height:16px;color:#1c2b33;letter-spacing:-0.73px;">$10.31</span>
<div class="abs" style="left:745.6px;top:452px;width:9.4px;height:1px;background:#4c5861"></div>
<div class="abs" style="left:848.4px;top:452px;width:9.4px;height:1px;background:#4c5861"></div>
<span class="t" style="left:704.8px;top:459px;font-size:8.5px;line-height:14px;color:#878f97;letter-spacing:-0.12px;">Per Purchase</span>
<span class="t" style="left:796.9px;top:459px;font-size:8.5px;line-height:14px;color:#878f97;letter-spacing:-0.09px;">Value, Purchase</span>
<span class="t" style="left:960.7px;top:444px;font-size:11px;line-height:16px;color:#1c2b33;letter-spacing:-0.52px;text-decoration:underline dotted #5b6770 1px;text-underline-offset:1.5px;">7</span>
<span class="t" style="left:888.5px;top:459px;font-size:8.5px;line-height:14px;color:#878f97;letter-spacing:0.39px;">Website purchases</span>
<span class="t" style="left:1046.2px;top:444px;font-size:11px;line-height:16px;color:#1c2b33;letter-spacing:-0.15px;">$0.09</span>
<span class="t" style="left:1149.2px;top:444px;font-size:11px;line-height:16px;color:#1c2b33;letter-spacing:-0.35px;">$0.66</span>
<div class="abs" style="left:53.5px;top:483.1px;width:16.8px;height:16.4px;background:#fff;border:1px solid #cfd5da;border-radius:3.5px"></div>
<div class="abs" style="left:98px;top:483.6px;width:27.3px;height:15px;background:#fff;border:1px solid #dde2e6;border-radius:8px"></div>
<div class="abs" style="left:100.2px;top:484.9px;width:12.4px;height:12.4px;background:#283943;border-radius:50%"></div>
<span class="t" style="left:151.8px;top:476px;font-size:11px;line-height:16px;color:#1b6ec2;letter-spacing:-0.52px;">New Sales Campaign panjabi kurta</span>
<span class="t" style="left:376.2px;top:477px;font-size:11px;line-height:16px;color:#1c2b33;letter-spacing:-0.38px;">Using ad set bu...</span>
<div class="abs" style="left:471px;top:480.5px;width:8.2px;height:8.2px;background:#c9cfd6;border-radius:50%"></div>
<span class="t" style="left:485.0px;top:477px;font-size:11px;line-height:16px;color:#1c2b33;letter-spacing:-0.16px;">Off</span>
<div class="abs" style="left:643.1px;top:484px;width:9.4px;height:1px;background:#4c5861"></div>
<div class="abs" style="left:745.6px;top:484px;width:9.4px;height:1px;background:#4c5861"></div>
<div class="abs" style="left:848.4px;top:484px;width:9.4px;height:1px;background:#4c5861"></div>
<div class="abs" style="left:961.2px;top:483px;width:9.4px;height:1px;background:#4c5861"></div>
<div class="abs" style="left:1063.6px;top:484px;width:9.4px;height:1px;background:#4c5861"></div>
<span class="t" style="left:704.8px;top:492px;font-size:8.5px;line-height:14px;color:#878f97;letter-spacing:-0.12px;">Per Purchase</span>
<span class="t" style="left:895.3px;top:491px;font-size:8.5px;line-height:14px;color:#878f97;letter-spacing:0.39px;">Website Purchase</span>
<span class="t" style="left:1148.0px;top:477px;font-size:11px;line-height:16px;color:#1c2b33;letter-spacing:-0.10px;">$0.00</span>
<span class="t" style="left:154.5px;top:511px;font-size:10.5px;line-height:16px;color:#1c2b33;letter-spacing:-0.23px;">Results from 37 campaigns</span>
<svg class="abs" style="left:279.5px;top:515.2px;" width="8.4" height="8.4" viewBox="0 0 8.4 8.4"><circle cx="4.2" cy="4.2" r="4.2" fill="#1c2b33"/><rect x="3.6" y="3.4" width="1.2" height="3.2" fill="#fff"/><rect x="3.6" y="1.6" width="1.2" height="1.2" fill="#fff"/></svg>
<svg class="abs" style="left:154.3px;top:530.8px;" width="8.4" height="6" viewBox="0 0 8.4 6"><path d="M0 3Q4.2 -2.6 8.4 3Q4.2 8.6 0 3Z" fill="#1c2b33"/><circle cx="4.2" cy="3" r="0.9" fill="#dfe3e6"/></svg>
<span class="t" style="left:165.7px;top:527px;font-size:8.5px;line-height:14px;color:#1c2b33;letter-spacing:-0.03px;">View results</span>
<span class="t" style="left:1006.0px;top:525px;font-size:17.5px;line-height:24px;color:rgba(125,130,135,0.56);letter-spacing:0.59px;">Activate Windows</span>
<span class="t" style="left:1006.0px;top:550px;font-size:12.5px;line-height:18px;color:rgba(120,125,130,0.55);letter-spacing:0.71px;">Go to Settings to activate Windows.</span>
<div class="abs" style="left:87.3px;top:370px;width:1160.3px;height:39.6px;border:4px solid #f00a0a"></div>
<svg class="abs" style="left:12px;top:60.5px;" width="16" height="16" viewBox="0 0 16 16"><circle cx="8" cy="8" r="7.2" fill="none" stroke="#3a4750" stroke-width="1.2" stroke-linecap="round" stroke-linejoin="round"/><path d="M1.2 10.2H14.8" fill="none" stroke="#3a4750" stroke-width="1.2" stroke-linecap="round" stroke-linejoin="round"/><path d="M8 8.6L10.6 4.8" fill="none" stroke="#3a4750" stroke-width="1.3" stroke-linecap="round" stroke-linejoin="round"/><circle cx="4" cy="6" r="0.6" fill="#3a4750"/><circle cx="6" cy="3.6" r="0.6" fill="#3a4750"/><circle cx="12" cy="6.6" r="0.6" fill="#3a4750"/></svg>
<div class="abs" style="left:6px;top:82.5px;width:27.8px;height:27.5px;background:#e1eef8;border-radius:5px"></div>
<svg class="abs" style="left:12px;top:89.5px;" width="15.6" height="14.4" viewBox="0 0 15.6 14.4"><g fill="#0a78be"><rect x="0" y="0" width="15.6" height="3.4"/><rect x="0" y="4.8" width="4.2" height="2.4"/><rect x="5.7" y="4.8" width="4.2" height="2.4"/><rect x="11.4" y="4.8" width="4.2" height="2.4"/><rect x="0" y="8.4" width="4.2" height="2.4"/><rect x="5.7" y="8.4" width="4.2" height="2.4"/><rect x="11.4" y="8.4" width="4.2" height="2.4"/><rect x="0" y="12" width="4.2" height="2.4"/><rect x="5.7" y="12" width="4.2" height="2.4"/><rect x="11.4" y="12" width="4.2" height="2.4"/></g></svg>
<svg class="abs" style="left:11px;top:116px;" width="17" height="17" viewBox="0 0 17 17"><path d="M5 3.2L14.4 4.2Q15.6 4.4 15.4 5.6L14.2 14.6Q14 15.8 12.8 15.6L5 14.8" fill="none" stroke="#3a4750" stroke-width="1.2" stroke-linecap="round" stroke-linejoin="round"/><rect x="0.8" y="0.8" width="10.4" height="13.2" rx="1" fill="#fff" stroke="#3a4750" stroke-width="1.2"/><path d="M3.4 0.8V14M5.6 4.2H9M5.6 6.6H9" fill="none" stroke="#3a4750" stroke-width="1" stroke-linecap="round" stroke-linejoin="round"/></svg>
<svg class="abs" style="left:11px;top:147px;" width="17" height="11.5" viewBox="0 0 17 11.5"><circle cx="8.5" cy="2.6" r="1.9" fill="none" stroke="#3a4750" stroke-width="1" stroke-linecap="round" stroke-linejoin="round"/><circle cx="3.4" cy="3" r="1.6" fill="none" stroke="#3a4750" stroke-width="1" stroke-linecap="round" stroke-linejoin="round"/><circle cx="13.6" cy="3" r="1.6" fill="none" stroke="#3a4750" stroke-width="1" stroke-linecap="round" stroke-linejoin="round"/><path d="M5 10.6V8.6Q5 6.4 8.5 6.4Q12 6.4 12 8.6V10.6Z" fill="none" stroke="#3a4750" stroke-width="1" stroke-linecap="round" stroke-linejoin="round"/><path d="M5 10.6H1V8.8Q1 6.8 3.6 6.8M12 10.6H16V8.8Q16 6.8 13.4 6.8" fill="none" stroke="#3a4750" stroke-width="1" stroke-linecap="round" stroke-linejoin="round"/></svg>
<svg class="abs" style="left:13px;top:174.5px;" width="13.5" height="12" viewBox="0 0 13.5 12"><path d="M0.8 4.2L11 0.8V9.2L0.8 6.6Z" fill="none" stroke="#3a4750" stroke-width="1.2" stroke-linecap="round" stroke-linejoin="round"/><path d="M3 7.2L3.8 11H6.2L5.6 8" fill="none" stroke="#3a4750" stroke-width="1.2" stroke-linecap="round" stroke-linejoin="round"/><path d="M12.6 4V6.2" fill="none" stroke="#3a4750" stroke-width="1.2" stroke-linecap="round" stroke-linejoin="round"/><circle cx="9.6" cy="9.8" r="1.6" fill="#3a4750"/></svg>
<svg class="abs" style="left:11px;top:203px;" width="17" height="11.6" viewBox="0 0 17 11.6"><rect x="0.7" y="0.7" width="15.6" height="10.2" rx="1.6" fill="none" stroke="#3a4750" stroke-width="1.3" stroke-linecap="round" stroke-linejoin="round"/><rect x="0.7" y="2.6" width="15.6" height="2.4" fill="#3a4750"/><path d="M3 8.4H5M6.6 8.4H10" fill="none" stroke="#3a4750" stroke-width="1" stroke-linecap="round" stroke-linejoin="round"/></svg>
<svg class="abs" style="left:11px;top:228.5px;" width="17" height="17.2" viewBox="0 0 17 17.2"><circle cx="8.5" cy="4.6" r="4" fill="none" stroke="#3a4750" stroke-width="1.2" stroke-linecap="round" stroke-linejoin="round"/><circle cx="2.4" cy="12.6" r="1.8" fill="none" stroke="#3a4750" stroke-width="1" stroke-linecap="round" stroke-linejoin="round"/><circle cx="8.5" cy="14.6" r="1.8" fill="none" stroke="#3a4750" stroke-width="1" stroke-linecap="round" stroke-linejoin="round"/><circle cx="14.6" cy="12.6" r="1.8" fill="none" stroke="#3a4750" stroke-width="1" stroke-linecap="round" stroke-linejoin="round"/><path d="M5.4 7.6L3.4 11M8.5 8.6V12.8M11.6 7.6L13.6 11" fill="none" stroke="#3a4750" stroke-width="1" stroke-linecap="round" stroke-linejoin="round"/></svg>
<div class="abs" style="left:14px;top:261.3px;width:12.5px;height:1.1px;background:#a3abb2"></div>
<div class="abs" style="left:14px;top:266.6px;width:12.5px;height:1.1px;background:#a3abb2"></div>
<div class="abs" style="left:14px;top:271.9px;width:12.5px;height:1.1px;background:#a3abb2"></div>
<div class="abs" style="left:11.5px;top:408.2px;width:16.5px;height:1px;background:#dfe3e7"></div>
<div class="abs" style="left:6.8px;top:414px;width:26.2px;height:26px;background:#ddf1ee;border-radius:50%"></div>
<span class="t" style="left:16.8px;top:418px;font-size:13px;line-height:19px;color:#3f8f92;letter-spacing:0.00px;">?</span>
<svg class="abs" style="left:13px;top:450.5px;" width="14.4" height="12.6" viewBox="0 0 14.4 12.6"><path d="M2.6 2.4Q0.6 2.4 0.6 4.4V10Q0.6 12 2.6 12" fill="none" stroke="#3a4750" stroke-width="1" stroke-linecap="round" stroke-linejoin="round"/><rect x="2.6" y="0.6" width="11.2" height="11.4" rx="1.6" fill="none" stroke="#3a4750" stroke-width="1" stroke-linecap="round" stroke-linejoin="round"/><rect x="6.4" y="3" width="2.8" height="2.6" fill="#3a4750"/><path d="M5 7.8H11.6M5 9.8H11.6" fill="none" stroke="#3a4750" stroke-width="0.8" stroke-linecap="round" stroke-linejoin="round"/></svg>
<svg class="abs" style="left:12.8px;top:473.5px;" width="15" height="15.6" viewBox="0 0 15 15.6"><path d="M6 0.8H9L9.5 2.8L11 3.6L13 3L14.4 5.6L13 7L13 8.6L14.4 10L13 12.6L11 12L9.5 12.8L9 14.8H6L5.5 12.8L4 12L2 12.6L0.6 10L2 8.6V7L0.6 5.6L2 3L4 3.6L5.5 2.8Z" fill="none" stroke="#3a4750" stroke-width="1.1" stroke-linecap="round" stroke-linejoin="round"/><circle cx="7.5" cy="7.8" r="2.6" fill="none" stroke="#3a4750" stroke-width="1.1" stroke-linecap="round" stroke-linejoin="round"/></svg>
<svg class="abs" style="left:13px;top:500px;" width="12" height="14.4" viewBox="0 0 12 14.4"><path d="M1 10.4Q2.6 8.6 2.6 5.4Q2.6 1.4 6 1.4Q9.4 1.4 9.4 5.4Q9.4 8.6 11 10.4Z" fill="none" stroke="#3a4750" stroke-width="1.2" stroke-linecap="round" stroke-linejoin="round"/><path d="M4.4 12.4Q6 14 7.6 12.4" fill="none" stroke="#3a4750" stroke-width="1.2" stroke-linecap="round" stroke-linejoin="round"/></svg>
<div class="abs" style="left:17px;top:493.2px;width:19px;height:12.8px;background:#c00f1f;border-radius:7px;border:1px solid #fff"></div>
<span class="t" style="left:21.6px;top:493px;font-size:9px;line-height:14px;font-weight:700;color:#fff;letter-spacing:0.10px;font-style:italic;">99</span>
<svg class="abs" style="left:13px;top:524px;" width="15.4" height="15.6" viewBox="0 0 15.4 15.6"><circle cx="6" cy="6" r="5.2" fill="none" stroke="#3a4750" stroke-width="1.15" stroke-linecap="round" stroke-linejoin="round"/><path d="M9.8 10L14.6 15" fill="none" stroke="#3a4750" stroke-width="1.25" stroke-linecap="round" stroke-linejoin="round"/></svg>
<svg class="abs" style="left:13.2px;top:549.4px;" width="14" height="15" viewBox="0 0 14 15"><ellipse cx="7" cy="9" rx="3.8" ry="5" fill="none" stroke="#3a4750" stroke-width="1.1" stroke-linecap="round" stroke-linejoin="round"/><path d="M7 4.2V14M4.6 5Q4.4 2.4 7 2.4Q9.6 2.4 9.4 5M4.4 1L5.6 2.8M9.6 1L8.4 2.8M3.2 7L0.8 5.8M3.2 9.4H0.6M3.4 11.8L1 13.4M10.8 7L13.2 5.8M10.8 9.4H13.4M10.6 11.8L13 13.4" fill="none" stroke="#3a4750" stroke-width="1" stroke-linecap="round" stroke-linejoin="round"/></svg>
</div></body></html>
